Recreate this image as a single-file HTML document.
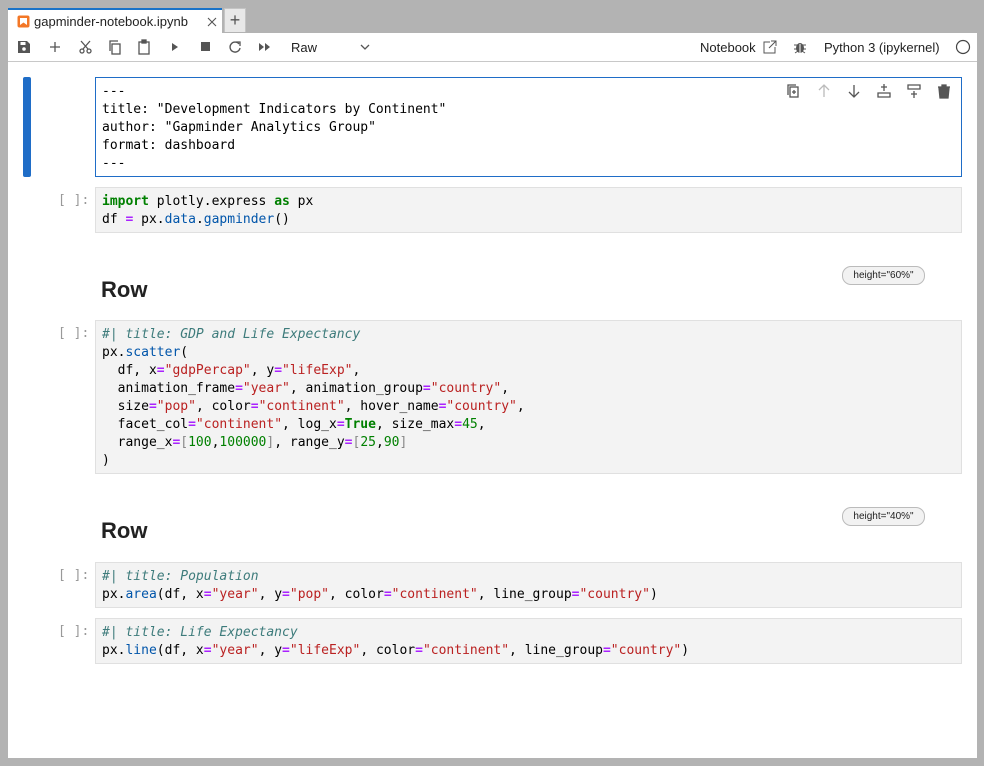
<!DOCTYPE html>
<html><head><meta charset="utf-8"><style>
*{box-sizing:border-box;margin:0;padding:0}
body{width:984px;height:766px;background:#b3b3b3;position:relative;overflow:hidden;font-family:"Liberation Sans",sans-serif}
.abs{position:absolute}
.main{left:8px;top:33px;width:969px;height:725px;background:#fff}
.tab{left:8px;top:8px;width:214px;height:25px;background:#fff;border-top:2px solid #1a73c8;font-size:13px;color:#222}
.ptab{left:224px;top:8px;width:22px;height:24px;background:#e8e8e8;border:1px solid #c4c4c4;border-bottom:none;text-align:center;font-size:18px;color:#555;line-height:22px}
.tb{top:61px;left:8px;width:969px;height:1px;background:#c8c8c8}
.cell{position:absolute;left:95px;width:867px;background:#f3f3f3;border:1px solid #e0e0e0;font-family:"DejaVu Sans Mono",monospace;font-size:13px;line-height:18px;padding:5px 6px 4px;color:#000;white-space:pre}
.pr{position:absolute;left:58px;font-family:"DejaVu Sans Mono",monospace;font-size:13px;color:#999;line-height:18px}
.k{color:#008000;font-weight:bold}.o{color:#aa22ff;font-weight:bold}.s{color:#ba2121}.f{color:#0055aa}.c{color:#3d7b7b;font-style:italic}.n{color:#008000}.b{color:#888}
h2{position:absolute;left:101px;font-size:22px;font-weight:600;color:#222}
.badge{position:absolute;left:842px;width:83px;height:19px;border:1px solid #bbb;border-radius:9px;background:#f2f2f2;font-size:10px;text-align:center;line-height:17px;color:#222}
</style></head><body>
<div class="abs main"></div>
<div class="abs tab"><svg class="abs" style="left:9px;top:5px" width="13" height="13"><rect x="0.5" y="0.5" width="12" height="12" rx="2" fill="#f37726"/><path d="M3 3h7v7l-3.5-2.5L3 10z" fill="#fff"/></svg><span class="abs" style="left:26px;top:4px">gapminder-notebook.ipynb</span><svg class="abs" style="left:198px;top:6px" width="12" height="12"><path d="M2 2l8 8M10 2l-8 8" stroke="#555" stroke-width="1.1"/></svg></div>
<div class="abs ptab">+</div>
<div class="abs tb"></div>
<svg class="abs" style="left:17px;top:39px" width="360" height="16" fill="#555" stroke="#555">
<path d="M1 2h9l3 3v9H1z" stroke="none"/><rect x="3.5" y="3" width="5" height="3" fill="#fff" stroke="none"/><circle cx="7" cy="10" r="1.8" fill="#fff" stroke="none"/>
<path d="M38 3v10M33 8h10" stroke-width="1.3" fill="none"/>
<g fill="none" stroke-width="1.3"><circle cx="65" cy="12" r="2"/><circle cx="72" cy="12" r="2"/><path d="M66 10l7-8M71 10l-7-8"/></g>
<g fill="none" stroke-width="1.3"><rect x="95" y="5" width="8" height="10"/><path d="M93 12V2h8"/></g>
<g fill="none" stroke-width="1.3"><rect x="122" y="3" width="10" height="12"/><rect x="125" y="1" width="4" height="3" fill="#555"/></g>
<path d="M155 4l6 4-6 4z" stroke="none"/>
<rect x="184" y="3" width="9" height="9" stroke="none"/>
<path d="M222 5a5 5 0 1 0 1 4" fill="none" stroke-width="1.4"/><path d="M219 3h4v4" fill="none" stroke-width="1.3"/>
<path d="M242 4l5 4-5 4zM248 4l5 4-5 4z" stroke="none"/>
</svg>
<span class="abs" style="left:291px;top:40px;font-size:13px;color:#222">Raw</span>
<svg class="abs" style="left:360px;top:44px" width="10" height="7"><path d="M1 1l4 4 4-4" fill="none" stroke="#555" stroke-width="1.3"/></svg>
<span class="abs" style="left:700px;top:40px;font-size:13px;color:#222">Notebook</span>
<svg class="abs" style="left:763px;top:40px" width="14" height="14" fill="none" stroke="#555" stroke-width="1"><path d="M7 2H1v11h11V7M8 1h5v5M13 1L6 8"/></svg>
<svg class="abs" style="left:793px;top:40px" width="14" height="14" fill="#555"><ellipse cx="7" cy="8" rx="4" ry="5"/><path d="M1 5h12M1 9h12M2 13l3-2M12 13l-3-2" stroke="#555"/><rect x="6.5" y="4" width="1" height="9" fill="#fff"/></svg>
<span class="abs" style="left:824px;top:40px;font-size:13px;color:#222">Python 3 (ipykernel)</span>
<svg class="abs" style="left:955px;top:39px" width="16" height="16"><circle cx="8" cy="8" r="6.5" fill="none" stroke="#444" stroke-width="1.2"/></svg>

<div class="abs" style="left:23px;top:77px;width:8px;height:100px;background:#1f6dc7;border-radius:2px"></div>
<div class="cell" style="top:77px;height:100px;background:#fff;border-color:#1f6dc7">---
title: "Development Indicators by Continent"
author: "Gapminder Analytics Group"
format: dashboard
---</div>
<svg class="abs" style="left:786px;top:83px" width="165" height="16" fill="none" stroke="#555" stroke-width="1.3">
<rect x="4" y="4" width="8" height="10"/><path d="M2 12V2h8M8 7v4M6 9h4"/>
<path d="M38 2v12M33 7l5-5 5 5" stroke="#bbb"/>
<path d="M68 2v12M63 9l5 5 5-5"/>
<path d="M98 1v7M95 4h6M92 10h12v4H92z"/>
<path d="M122 2h12v4h-12zM128 8v7M125 11h6"/>
<path d="M152 4h12M156 4V2h4v2M153 5h10l-1 10h-8z" fill="#555"/>
</svg>

<div class="pr" style="top:192px">[ ]:</div>
<div class="cell" style="top:187px;height:46px"><span class="k">import</span> plotly.express <span class="k">as</span> px
df <span class="o">=</span> px<span>.</span><span class="f">data</span>.<span class="f">gapminder</span>()</div>

<h2 style="top:277px">Row</h2>
<div class="badge" style="top:266px">height="60%"</div>

<div class="pr" style="top:325px">[ ]:</div>
<div class="cell" style="top:320px;height:154px"><span class="c">#| title: GDP and Life Expectancy</span>
px.<span class="f">scatter</span>(
  df, x<span class="o">=</span><span class="s">"gdpPercap"</span>, y<span class="o">=</span><span class="s">"lifeExp"</span>,
  animation_frame<span class="o">=</span><span class="s">"year"</span>, animation_group<span class="o">=</span><span class="s">"country"</span>,
  size<span class="o">=</span><span class="s">"pop"</span>, color<span class="o">=</span><span class="s">"continent"</span>, hover_name<span class="o">=</span><span class="s">"country"</span>,
  facet_col<span class="o">=</span><span class="s">"continent"</span>, log_x<span class="o">=</span><span class="k">True</span>, size_max<span class="o">=</span><span class="n">45</span>,
  range_x<span class="o">=</span><span class="b">[</span><span class="n">100</span>,<span class="n">100000</span><span class="b">]</span>, range_y<span class="o">=</span><span class="b">[</span><span class="n">25</span>,<span class="n">90</span><span class="b">]</span>
)</div>

<h2 style="top:518px">Row</h2>
<div class="badge" style="top:507px">height="40%"</div>

<div class="pr" style="top:567px">[ ]:</div>
<div class="cell" style="top:562px;height:46px"><span class="c">#| title: Population</span>
px.<span class="f">area</span>(df, x<span class="o">=</span><span class="s">"year"</span>, y<span class="o">=</span><span class="s">"pop"</span>, color<span class="o">=</span><span class="s">"continent"</span>, line_group<span class="o">=</span><span class="s">"country"</span>)</div>

<div class="pr" style="top:623px">[ ]:</div>
<div class="cell" style="top:618px;height:46px"><span class="c">#| title: Life Expectancy</span>
px.<span class="f">line</span>(df, x<span class="o">=</span><span class="s">"year"</span>, y<span class="o">=</span><span class="s">"lifeExp"</span>, color<span class="o">=</span><span class="s">"continent"</span>, line_group<span class="o">=</span><span class="s">"country"</span>)</div>
</body></html>
